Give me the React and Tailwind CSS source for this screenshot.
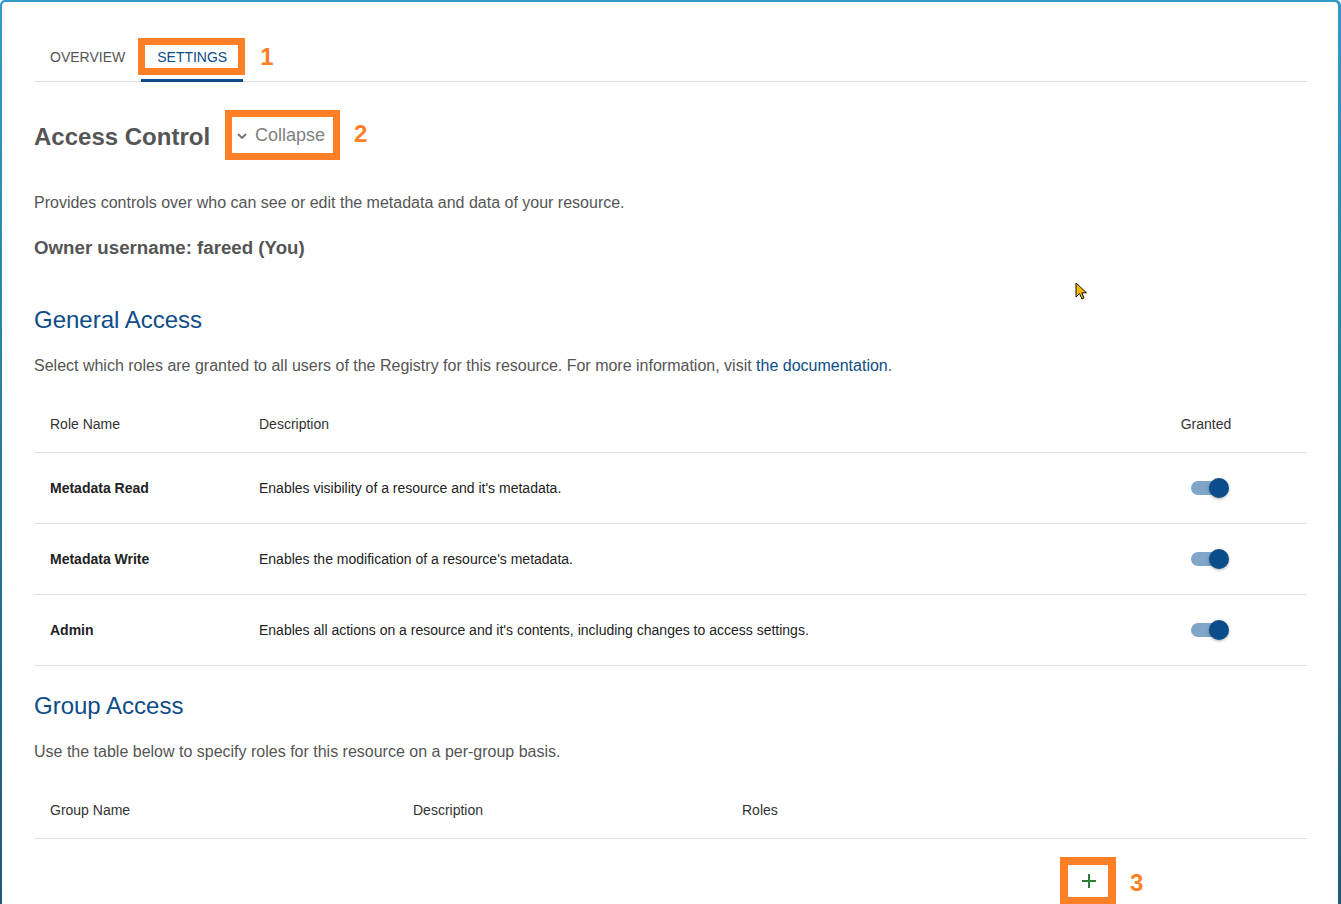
import React from "react";

const roles = [
  { name: "Metadata Read", desc: "Enables visibility of a resource and it's metadata." },
  { name: "Metadata Write", desc: "Enables the modification of a resource's metadata." },
  { name: "Admin", desc: "Enables all actions on a resource and it's contents, including changes to access settings." },
];

function Toggle() {
  return (
    <div className="relative w-[38px] h-[20px] ml-[8px]">
      <div className="absolute left-0 top-[3px] w-[34px] h-[14px] rounded-full bg-[#7fa6c7]" />
      <div className="absolute right-0 top-0 w-[20px] h-[20px] rounded-full bg-[#0b4c8a] shadow-[0_1px_3px_rgba(0,0,0,0.35)]" />
    </div>
  );
}

export default function App() {
  return (
    <div
      className="w-[1341px] h-[904px] overflow-hidden rounded-t-[5px] pt-[2px] pl-[2px] pr-[3px] bg-[linear-gradient(to_bottom,#3599c8,#1e5a77)]"
      style={{ fontFamily: '"Liberation Sans", Arial, sans-serif' }}
    >
      <div className="relative bg-white h-[902px] rounded-t-[4px] pl-[32px] pr-[31px] pt-[30px] text-[#555]">
        {/* Tabs */}
        <div className="flex h-[50px] border-b border-[#dedede]">
          <div className="flex items-center px-4 pt-[3px] text-[14px] text-[#555] -mb-px border-b-[3px] border-transparent">OVERVIEW</div>
          <div className="relative flex items-center px-4 pt-[3px] text-[14px] text-[#0d4c87] -mb-px border-b-[3px] border-[#0d4c87]">
            SETTINGS
            <div className="absolute left-[-3px] top-[6px] w-[107px] h-[37px] border-[7px] border-[#ff7f27]" />
            <div className="absolute left-[119px] top-[10px] text-[24px] font-bold text-[#ff7f27] leading-[30px]">1</div>
          </div>
        </div>

        {/* Heading row */}
        <div className="mt-[28px] flex items-center h-[50px]">
          <h1 className="text-[24px] font-bold text-[#555] leading-[32px] pt-[4px]">Access Control</h1>
          <div className="ml-[15px] h-[50px] w-[115px] border-[7px] border-[#ff7f27] flex items-center pl-[4px]">
            <svg width="12" height="10" viewBox="0 0 12 10" className="mt-[2px]">
              <path d="M2 3 L6 7 L10 3" fill="none" stroke="#707070" strokeWidth="1.8" />
            </svg>
            <span className="ml-[7px] text-[18px] text-[#808080] leading-[24px]">Collapse</span>
          </div>
          <div className="ml-[14px] text-[24px] font-bold text-[#ff7f27] leading-[30px] -mt-[2px]">2</div>
        </div>

        <p className="mt-[31px] text-[16px] leading-[24px]">
          Provides controls over who can see or edit the metadata and data of your resource.
        </p>
        <p className="mt-[20px] text-[18.7px] leading-[26px] font-bold text-[#555]">Owner username: fareed (You)</p>

        <h2 className="mt-[43px] text-[24px] leading-[32px] text-[#0d4c87]">General Access</h2>
        <p className="mt-[18px] text-[16px] leading-[24px]">
          Select which roles are granted to all users of the Registry for this resource. For more information, visit{" "}
          <span className="text-[#0d4c87]">the documentation</span>.
        </p>

        <div className="mt-[18px]">
          <div className="grid grid-cols-[209px_1fr_202px] h-[57px] items-center border-b border-[#e0e0e0] text-[14px] text-[#333]">
            <div className="pl-4">Role Name</div>
            <div className="pl-4">Description</div>
            <div className="text-center">Granted</div>
          </div>
          {roles.map((r) => (
            <div key={r.name} className="grid grid-cols-[209px_1fr_202px] h-[71px] items-center border-b border-[#e0e0e0] text-[14px] text-[#222]">
              <div className="pl-4 font-bold">{r.name}</div>
              <div className="pl-4">{r.desc}</div>
              <div className="flex justify-center">
                <Toggle />
              </div>
            </div>
          ))}
        </div>

        <h2 className="mt-[24px] text-[24px] leading-[32px] text-[#0d4c87]">Group Access</h2>
        <p className="mt-[18px] text-[16px] leading-[24px]">
          Use the table below to specify roles for this resource on a per-group basis.
        </p>

        <div className="mt-[18px]">
          <div className="grid grid-cols-[363px_329px_1fr] h-[57px] items-center border-b border-[#e0e0e0] text-[14px] text-[#333]">
            <div className="pl-4">Group Name</div>
            <div className="pl-4">Description</div>
            <div className="pl-4">Roles</div>
          </div>
        </div>

        <div className="mt-[18px] flex items-center ml-[1026px]">
          <div className="w-[56px] h-[48px] border-[8px] border-[#ff7f27] flex items-center justify-center pl-px">
            <svg width="14" height="14" viewBox="0 0 14 14">
              <path d="M7 0 V14 M0 7 H14" stroke="#2e7d32" strokeWidth="2" />
            </svg>
          </div>
          <div className="ml-[14px] text-[24px] font-bold text-[#ff7f27] leading-[30px] mt-[4px]">3</div>
        </div>

        {/* mouse cursor */}
        <svg className="absolute left-[1073px] top-[280px]" width="14" height="20" viewBox="0 0 14 20">
          <path d="M1 1 L1 15 L4.5 11.5 L7 17 L9 16 L6.8 10.8 L11.5 10.8 Z" fill="#f5b800" stroke="#111" strokeWidth="1" strokeLinejoin="round" />
        </svg>
      </div>
    </div>
  );
}
